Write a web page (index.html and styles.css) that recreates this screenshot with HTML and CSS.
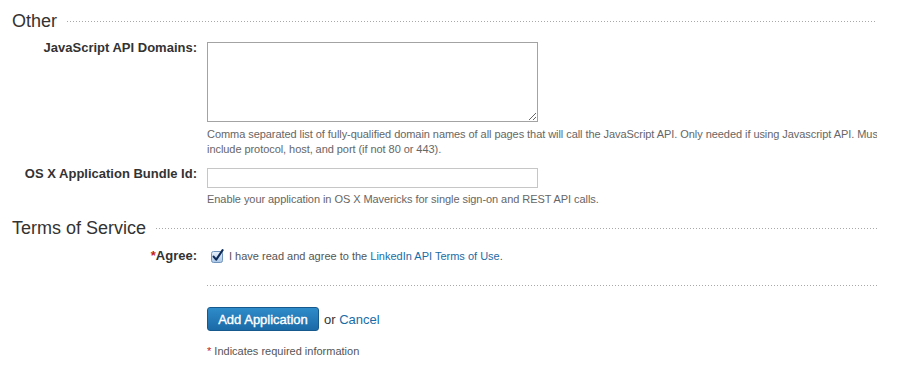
FILE: index.html
```html
<!DOCTYPE html>
<html lang="en">
  <head>
    <meta charset="UTF-8" />
    <title>Add Application</title>
    <link rel="stylesheet" href="styles.css">
  </head>
  <body>
    <div class="page">
      <!-- Other -->
      <div class="section-head">
        <h2>Other</h2>
        <span class="rule"></span>
      </div>

      <div class="row">
        <label class="row-label" for="domains">JavaScript API Domains:</label>
        <div class="row-field">
          <textarea id="domains" class="domains"></textarea>
          <p class="help">Comma separated list of fully-qualified domain names of all pages that will call the JavaScript API. Only needed if using Javascript API. Must include protocol, host, and port (if not 80 or 443).</p>
        </div>
      </div>

      <div class="row">
        <label class="row-label" for="bundle">OS X Application Bundle Id:</label>
        <div class="row-field">
          <input type="text" id="bundle" class="bundle" />
          <p class="help">Enable your application in OS X Mavericks for single sign-on and REST API calls.</p>
        </div>
      </div>

      <!-- Terms of Service -->
      <div class="section-head terms">
        <h2>Terms of Service</h2>
        <span class="rule"></span>
      </div>

      <div class="row agree-row">
        <label class="row-label"><span class="req">*</span>Agree:</label>
        <div class="row-field agree">
          <svg class="check" width="14" height="14" viewBox="0 0 14 14">
            <defs>
              <linearGradient id="cb" x1="0" y1="0" x2="0" y2="1">
                <stop offset="0" stop-color="#eaf2fb" />
                <stop offset="1" stop-color="#a9c6e6" />
              </linearGradient>
            </defs>
            <rect x="0.5" y="2.5" width="11" height="11" rx="2" fill="url(#cb)" stroke="#6f93ba" />
            <path d="M2.6 7.6 L5.2 10.6 L11.6 1.2" fill="none" stroke="#0f2b58" stroke-width="2.1" stroke-linecap="round" stroke-linejoin="round" />
          </svg>
          <span>I have read and agree to the <a href="#">LinkedIn API Terms of Use</a>.</span>
        </div>
      </div>

      <div class="actions">
        <div class="separator"></div>
        <div class="buttons">
          <button type="button" class="btn-add">Add Application</button>
          <span class="or">or <a href="#">Cancel</a></span>
        </div>
        <p class="note"><span class="req">*</span> Indicates required information</p>
      </div>
    </div>
  </body>
</html>
```

FILE: styles.css
```css
* {
  box-sizing: border-box;
}

body {
  margin: 0;
  background: #fff;
  color: #333;
  font-family: "Liberation Sans", Arial, sans-serif;
}

a {
  color: #1a6ca6;
  text-decoration: none;
}

.page {
  width: 877px;
  overflow: hidden;
  padding-top: 10px;
}

.section-head {
  display: flex;
  align-items: center;
  gap: 10px;
  padding-left: 12px;
}

.section-head h2 {
  margin: 0;
  font-size: 18px;
  font-weight: normal;
  line-height: 22px;
  color: #333;
}

.section-head.terms {
  margin-top: 10px;
}

.rule {
  flex: 1;
  height: 1px;
  margin-top: 1px;
  background-image: linear-gradient(to right, #a8a8a8 1px, transparent 1px);
  background-size: 3px 1px;
  background-repeat: repeat-x;
}

.row {
  display: grid;
  grid-template-columns: 197px 700px;
  column-gap: 10px;
  margin-top: 8px;
}

.row + .row {
  margin-top: 9px;
}

.row-label {
  text-align: right;
  font-size: 13px;
  font-weight: bold;
  line-height: 16px;
  color: #333;
}

.row-field {
  padding-top: 2px;
}

.domains {
  display: block;
  width: 331px;
  height: 80px;
  margin: 0;
  border: 1px solid #a3a3a3;
  font-family: inherit;
}

.bundle {
  display: block;
  width: 331px;
  height: 20px;
  margin: 0;
  border: 1px solid #c6c6c6;
  font-family: inherit;
}

.help {
  margin: 5px 0 0;
  font-size: 11px;
  line-height: 15px;
  letter-spacing: -0.06px;
  color: #666;
}

.bundle + .help {
  margin-top: 4px;
}

.req {
  color: #c21b1b;
}

.agree-row {
  margin-top: 9px;
}

.agree {
  display: flex;
  align-items: flex-start;
  padding-top: 0;
  padding-left: 4px;
  font-size: 11px;
  line-height: 16px;
  color: #555;
}

.check {
  margin-top: 1px;
  margin-right: 4px;
  flex: none;
}

.actions {
  margin-left: 207px;
}

.separator {
  height: 1px;
  margin-top: 21px;
  background-image: linear-gradient(to right, #a8a8a8 1px, transparent 1px);
  background-size: 3px 1px;
  background-repeat: repeat-x;
}

.buttons {
  display: flex;
  align-items: center;
  gap: 5px;
  margin-top: 21px;
}

.btn-add {
  height: 24px;
  width: 112px;
  padding: 0;
  border: 1px solid #16598c;
  border-radius: 3px;
  background: linear-gradient(#2f8bc9, #1a6aa7);
  color: #fff;
  font-family: inherit;
  font-size: 13px;
  -webkit-text-stroke: 0.35px #fff;
  cursor: pointer;
}

.or {
  font-size: 13px;
  color: #333;
}

.note {
  margin: 13px 0 0;
  font-size: 11px;
  line-height: 15px;
  color: #555;
}
```
